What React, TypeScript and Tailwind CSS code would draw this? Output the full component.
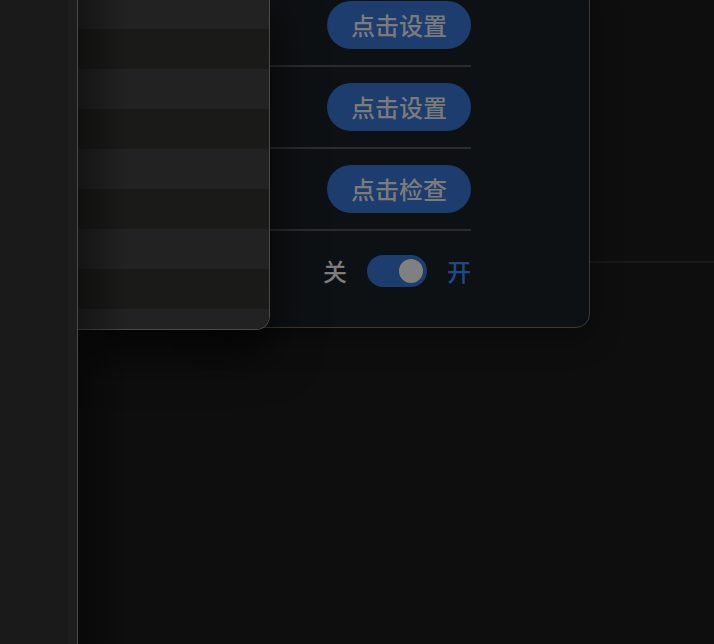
import React from "react";

const font = { fontFamily: '"Noto Sans CJK SC", "Noto Sans", sans-serif' };

function SetButton({ label }: { label: string }) {
  return (
    <button className="h-12 rounded-full bg-[#1d3d6f] px-6 text-[24px] font-medium leading-none text-[#7b7b7b]">
      {label}
    </button>
  );
}

function Row({ children }: { children: React.ReactNode }) {
  return <div className="flex h-20 items-center justify-end">{children}</div>;
}

export default function App() {
  const stripes = Array.from({ length: 9 }, (_, i) => i);
  return (
    <div className="flex h-[644px] w-[714px] overflow-hidden bg-[#0e0e0e]" style={font}>
      {/* sidebar */}
      <div className="flex h-full w-[78px] shrink-0 border-r border-[#494949] bg-[#1a1a1a]">
        <div className="flex-1" />
        <div className="w-[9px] bg-[#1d1d1d]" />
      </div>

      {/* main */}
      <div className="relative flex-1 overflow-hidden">
        <div className="h-[263px] border-b-2 border-[#191919]" />

        {/* dialog */}
        <div className="absolute left-[122px] top-[-16px] w-[390px] rounded-br-[14px] border border-[#3a3a3a] bg-[#0e1113] pl-6 pb-4 pr-[118px] shadow-[0_10px_30px_rgba(0,0,0,0.35)]">
          <Row>
            <SetButton label="点击设置" />
          </Row>
          <div className="h-[2px] bg-[#2c2c2c]" />
          <Row>
            <SetButton label="点击设置" />
          </Row>
          <div className="h-[2px] bg-[#2c2c2c]" />
          <Row>
            <SetButton label="点击检查" />
          </Row>
          <div className="h-[2px] bg-[#2c2c2c]" />
          <Row>
            <div className="flex items-center gap-5 text-[24px] font-medium leading-none">
              <span className="text-[#7d7d7d]">关</span>
              <div className="flex h-8 w-[60px] items-center justify-end rounded-full bg-[#1d3d6f] px-1">
                <div className="h-6 w-6 rounded-full bg-[#808080]" />
              </div>
              <span className="text-[#1e4a8c]">开</span>
            </div>
          </Row>
        </div>

        {/* striped panel */}
        <div className="absolute left-0 top-[-11px] h-[341px] w-[192px] overflow-hidden rounded-br-[14px] border-b border-r border-[#4a4a4a] shadow-[0_20px_50px_rgba(0,0,0,0.75)]">
          {stripes.map((i) => (
            <div
              key={i}
              className={i % 2 === 0 ? "h-10 bg-[#222222]" : "h-10 bg-[#1a1a19]"}
            />
          ))}
        </div>

        {/* left edge shade */}
        <div className="pointer-events-none absolute inset-y-0 left-0 w-[50px] bg-gradient-to-r from-black/40 to-transparent" />
      </div>
    </div>
  );
}
